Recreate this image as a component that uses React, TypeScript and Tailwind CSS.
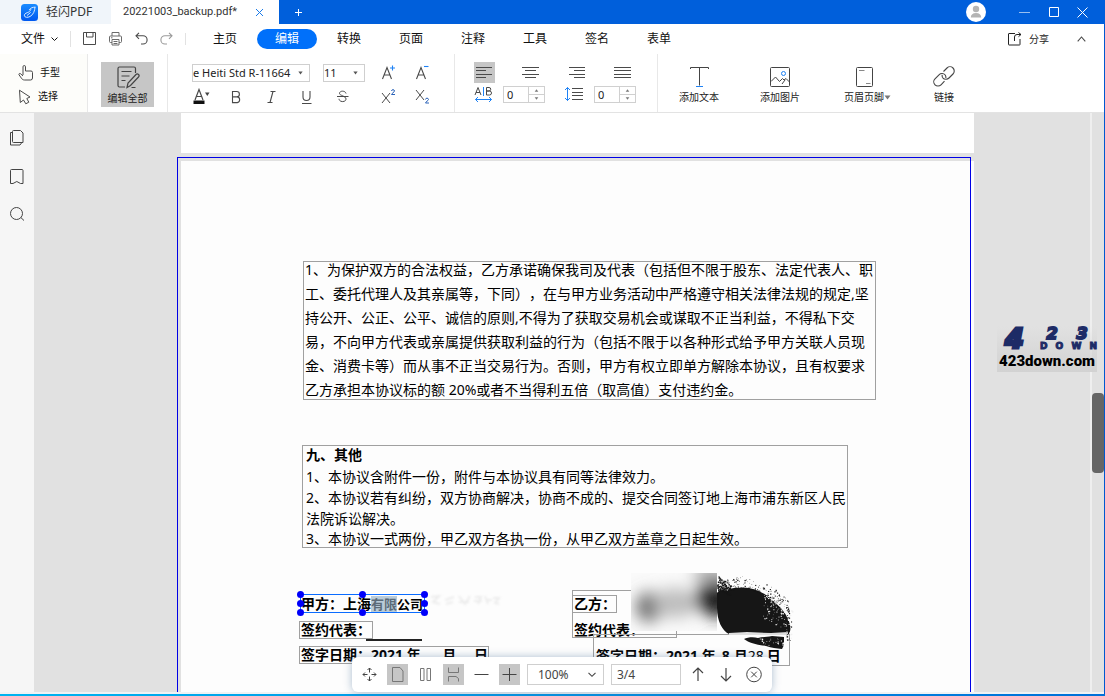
import React from "react";

type IconProps = { w: number; h: number; children: React.ReactNode; className?: string; sw?: number };

function Icon({ w, h, children, className = "", sw = 1 }: IconProps) {
  return (
    <svg
      width={w}
      height={h}
      viewBox={`0 0 ${w} ${h}`}
      fill="none"
      stroke="currentColor"
      strokeWidth={sw}
      className={`shrink-0 ${className}`}
      aria-hidden="true"
    >
      {children}
    </svg>
  );
}

function Caret({ className = "" }: { className?: string }) {
  return (
    <svg width="7" height="5" viewBox="0 0 7 5" className={`shrink-0 ${className}`} aria-hidden="true">
      <path d="M0.5 0.5h6L3.5 4.5z" fill="currentColor" />
    </svg>
  );
}

function TitleBar() {
  return (
    <header className="flex h-6 shrink-0 items-stretch bg-[#005fdb] text-[12px] text-[#333]">
      <div className="flex w-[111px] items-center gap-2 bg-[#f0f5fa] pl-[21px]">
        <svg width="17" height="17" viewBox="0 0 17 17" aria-hidden="true">
          <defs>
            <linearGradient id="logoFill" x1="0" y1="0" x2="0" y2="1">
              <stop offset="0" stopColor="#1a8cff" />
              <stop offset="1" stopColor="#0058f0" />
            </linearGradient>
          </defs>
          <rect width="17" height="17" rx="3.5" fill="url(#logoFill)" />
          <path
            d="M14 3.200C11.500 3.200 9.800 3.800 8.300 5.600M14 3.200c-.2 3.600-1.500 7.400-5 9.300-2.600 1.400-5.200.9-5.600-.6-.4-1.600 1.200-2.700 2.800-3.200 1.800-.6 3-1.500 3.600-3.200M6.300 11.300l3-2.600"
            fill="none"
            stroke="#d8eaff"
            strokeWidth="1"
            strokeLinecap="round"
          />
        </svg>
        <span className="whitespace-nowrap">轻闪PDF</span>
      </div>
      <div className="flex w-[168px] items-center justify-between bg-white pl-3 pr-[15px]">
        <span className="whitespace-nowrap font-['Roboto'] text-[11px]">20221003_backup.pdf*</span>
        <button aria-label="关闭标签页" className="text-[#1a7ae8]">
          <Icon w={9} h={9}>
            <path d="M1 1l7 7M8 1L1 8" />
          </Icon>
        </button>
      </div>
      <button aria-label="新建标签页" className="flex w-[38px] items-center justify-center text-white">
        <Icon w={7} h={7}>
          <path d="M3.500 0v7M0 3.500h7" />
        </Icon>
      </button>
      <div className="ml-auto flex items-center pr-[10px] text-white">
        <button aria-label="账户" className="mr-[23px]">
          <svg width="20" height="20" viewBox="0 0 20 20" aria-hidden="true">
            <circle cx="10" cy="10" r="10" fill="#fff" />
            <circle cx="10" cy="7" r="3.200" fill="#b4b4b4" />
            <path d="M4.800 15.500c0-3 2-4.500 5.200-4.500s5.200 1.500 5.200 4.500z" fill="#b4b4b4" />
          </svg>
        </button>
        <button aria-label="最小化" className="flex w-[30px] justify-center">
          <Icon w={11} h={11} className="opacity-60">
            <path d="M0 5.500h11" />
          </Icon>
        </button>
        <button aria-label="最大化" className="flex w-[30px] justify-center">
          <Icon w={10} h={10}>
            <path d="M0.500 0.500h9v9h-9z" />
          </Icon>
        </button>
        <button aria-label="关闭" className="flex w-[26px] justify-center">
          <Icon w={11} h={11}>
            <path d="M0.500 0.500l10 10M10.500 0.500l-10 10" />
          </Icon>
        </button>
      </div>
    </header>
  );
}

const MENU = ["主页", "编辑", "转换", "页面", "注释", "工具", "签名", "表单"];

function MenuBar() {
  return (
    <div className="flex h-[30px] shrink-0 items-center text-[12px] text-[#111]">
      <button className="flex items-center gap-[6px] pl-[21px]">
        文件
        <Icon w={7} h={5}>
          <path d="M0.500 0.500l3 3 3-3" />
        </Icon>
      </button>
      <div className="ml-3 h-4 w-px bg-[#e2e2e2]" />
      <div className="ml-3 flex items-center gap-3 text-[#4a4a4a]">
        <button aria-label="保存">
          <Icon w={14} h={14}>
            <path d="M0.500 0.500h12v12h-12zM3.500 0.500v4.500h6.500v-4.500" />
          </Icon>
        </button>
        <button aria-label="打印">
          <Icon w={14} h={14} className="text-[#6a6a6a]">
            <path d="M3 4V0.500h7V4M3 10.500H1.500a1 1 0 0 1-1-1V5a1 1 0 0 1 1-1h10a1 1 0 0 1 1 1v4.500a1 1 0 0 1-1 1H10M3 7.500h7v5.500H3zM4.500 9.500h4M4.500 11.500h4M2 5.800h1.500" />
          </Icon>
        </button>
        <button aria-label="撤销">
          <Icon w={13} h={14} sw={1.1}>
            <path d="M4 0.800L1 3.800l3 3M1 3.800h7a4 4 0 0 1 0 8.200H6" />
          </Icon>
        </button>
        <button aria-label="重做" className="text-[#9a9a9a]">
          <Icon w={13} h={14} sw={1.1}>
            <path d="M9 0.800l3 3-3 3M12 3.800H5a4 4 0 0 0 0 8.200h2" />
          </Icon>
        </button>
      </div>
      <div className="ml-3 h-3 w-px bg-[#e2e2e2]" />
      <nav className="ml-[9px] flex gap-[2px]">
        {MENU.map((m) => (
          <button
            key={m}
            className={
              m === "编辑"
                ? "h-5 w-[60px] rounded-full bg-[#0070fa] leading-5 text-white"
                : "h-5 w-[60px] leading-5"
            }
          >
            {m}
          </button>
        ))}
      </nav>
      <div className="ml-auto flex items-center pr-[18px] text-[#4a4a4a]">
        <button className="flex items-center gap-[7px] text-[10px] text-[#222]">
          <Icon w={14} h={14}>
            <path d="M7 1.500H1a.5.500 0 0 0-.5.500v10.500a.5.500 0 0 0 .5.500h10.500a.5.500 0 0 0 .5-.5V7M6.500 9V5a2.500 2.500 0 0 1 2.500-2.500h4M10.500 0.500l2.500 2-2.500 2.200" />
          </Icon>
          分享
        </button>
        <button aria-label="收起功能区" className="ml-7">
          <Icon w={9} h={6} sw={1.1}>
            <path d="M0.700 5.300l3.800-4.300 3.800 4.300" />
          </Icon>
        </button>
      </div>
    </div>
  );
}

function Combo({ label, value, className }: { label: string; value: string; className: string }) {
  return (
    <div className={`grid h-[18px] items-center border border-[#cfcfcf] bg-white ${className}`}>
      <select
        aria-label={label}
        defaultValue={value}
        className="col-start-1 row-start-1 h-4 w-full appearance-none bg-transparent text-[11px] leading-4 text-[#222] outline-none"
      >
        <option>{value}</option>
      </select>
      <Caret className="pointer-events-none col-start-1 row-start-1 mr-[6px] h-1 w-[5px] justify-self-end text-[#555]" />
    </div>
  );
}

function Spinner({ label }: { label: string }) {
  return (
    <div className="flex h-[17px] w-[42px] border border-[#d0d0d0] bg-white">
      <input
        aria-label={label}
        defaultValue="0"
        className="w-6 pl-[3px] text-[11px] leading-[15px] text-[#222] outline-none"
      />
      <div className="flex flex-1 flex-col border-l border-[#d0d0d0] text-[#777]">
        <button aria-label={`增加${label}`} className="flex flex-1 items-center justify-center border-b border-[#d0d0d0]">
          <Caret className="h-[3px] w-[5px] rotate-180" />
        </button>
        <button aria-label={`减少${label}`} className="flex flex-1 items-center justify-center">
          <Caret className="h-[3px] w-[5px]" />
        </button>
      </div>
    </div>
  );
}

function ToolButton({ label, children, active = false }: { label: string; children: React.ReactNode; active?: boolean }) {
  return (
    <button
      aria-label={label}
      className={
        active
          ? "flex h-[21px] w-[21px] items-center justify-center bg-[#c6c6c6]"
          : "flex h-[21px] w-[21px] items-center justify-center"
      }
    >
      {children}
    </button>
  );
}

function Ribbon() {
  return (
    <div className="flex h-[59px] shrink-0 border-b border-[#e3e3e3] text-[10px] text-[#4a4a4a]">
      <div className="flex w-[88px] flex-col gap-[3px] border-r border-[#e8e8e8] bg-[#fdfdfa] pl-[18px] pt-2">
        <button className="flex h-[21px] items-center gap-[6px] text-[#111]">
          <Icon w={16} h={16} className="text-[#4a4a4a]">
            <path d="M5 10V1.800a1.200 1.200 0 0 1 2.500 0V6h5.500a1.500 1.500 0 0 1 1.500 1.500V13a2 2 0 0 1-2 2H6.500c-1.500 0-2.500-.8-3.200-2L1 9.800c-.5-1 .7-1.800 1.500-1.100l2.500 2.300" />
          </Icon>
          手型
        </button>
        <button className="flex h-[21px] items-center gap-1 text-[#111]">
          <Icon w={16} h={16} className="text-[#4a4a4a]">
            <path d="M1.500 1.200l.8 12.300 3.200-2.500 2.300 3.800 3-1.600-2-3.700 3.200-1.500z" strokeLinejoin="round" />
          </Icon>
          选择
        </button>
      </div>
      <div className="flex w-[80px] justify-center border-r border-[#e8e8e8] pt-2">
        <button className="flex h-[45px] w-[53px] flex-col items-center gap-[2px] bg-[#c6c6c6] pt-1 text-[#222]">
          <Icon w={24} h={23} className="text-[#444]" sw={1.2}>
            <path d="M19.500 7V2.500a1.500 1.500 0 0 0-1.500-1.500H3.500a1.500 1.500 0 0 0-1.500 1.500v17a1.500 1.500 0 0 0 1.500 1.500H9M5.500 5.500h10M5.500 10h8M5.500 14.500h4M11 21.500l1-4.500 8-8.500a1.500 1.500 0 0 1 2.500 2.500l-8 8.500zM15.500 21.500h4" />
          </Icon>
          <span className="whitespace-nowrap leading-[14px]">编辑全部</span>
        </button>
      </div>
      <div className="flex flex-col gap-[3px] border-r border-[#e8e8e8] pl-6 pr-[21px] pt-2">
        <div className="flex h-[21px] items-center gap-[13px]">
          <Combo label="字体" value="e Heiti Std R-11664" className="w-[118px]" />
          <Combo label="字号" value="11" className="w-[42px]" />
          <ToolButton label="增大字号">
            <Icon w={15} h={15} sw={1.1}>
              <path d="M1.500 14L6 2.500 10.500 14M3 10h6" />
              <path d="M11.500 0.500v5M9 3h5" stroke="#1e82f5" />
            </Icon>
          </ToolButton>
          <ToolButton label="减小字号">
            <Icon w={15} h={15} sw={1.1}>
              <path d="M1.500 14L6 2.500 10.500 14M3 10h6" />
              <path d="M9 1.500h4.500" stroke="#1e82f5" />
            </Icon>
          </ToolButton>
        </div>
        <div className="flex h-[21px] items-center">
          <div className="flex gap-[14px]">
            <ToolButton label="字体颜色">
              <Icon w={19} h={17} sw={1.2}>
                <path d="M2 12L6 1.500 10 12M3.500 8.500h5" />
                <path d="M0.500 12.500h11v3.500h-11z" fill="#111" stroke="none" />
                <path d="M12 4.500h4.500l-2.200 3.500z" fill="#444" stroke="none" />
              </Icon>
            </ToolButton>
            <ToolButton label="粗体">
              <Icon w={15} h={14} sw={1.1}>
                <path d="M2.500 1.500h4.200a2.700 2.700 0 0 1 0 5.400H2.500zM2.500 6.900h4.800a2.900 2.900 0 0 1 0 5.700H2.500z" />
              </Icon>
            </ToolButton>
            <ToolButton label="斜体">
              <Icon w={15} h={14} sw={1.1}>
                <path d="M5.500 1.500h5M2.500 12.500h5M8 1.500L5 12.500" />
              </Icon>
            </ToolButton>
            <ToolButton label="下划线">
              <Icon w={15} h={14} sw={1.1}>
                <path d="M3 1v6a3.500 3.500 0 0 0 7 0V1M2 13.500h9.500" />
              </Icon>
            </ToolButton>
            <ToolButton label="删除线">
              <Icon w={13} h={13}>
                <path d="M10 3.500C9.500 0.500 3.500 0.300 3.500 3.500c0 2 6.500 2.500 6.500 5.500 0 3.500-6.800 3.500-7-0.200M1 6.500h11.500" />
              </Icon>
            </ToolButton>
          </div>
          <div className="ml-[25px] flex gap-[13px]">
            <ToolButton label="上标">
              <Icon w={15} h={15}>
                <path d="M1 4l8 10M9 4L1 14" />
                <path d="M10.500 2c0-1.800 3-1.800 3 0 0 1-3 2.500-3 3.500h3.500" stroke="#2a62b8" />
              </Icon>
            </ToolButton>
            <ToolButton label="下标">
              <Icon w={15} h={15}>
                <path d="M1 1l8 10M9 1L1 11" />
                <path d="M10.500 10.500c0-1.800 3-1.800 3 0 0 1-3 2.500-3 3.500h3.500" stroke="#2a62b8" />
              </Icon>
            </ToolButton>
          </div>
        </div>
      </div>
      <div className="flex flex-col gap-[3px] border-r border-[#e8e8e8] pl-[19px] pr-[21px] pt-2">
        <div className="flex h-[21px] gap-[25px]">
          <ToolButton label="左对齐" active>
            <Icon w={17} h={12}>
              <path d="M0 0.500h16M0 3.500h10M0 7.500h16M0 10.500h10" />
            </Icon>
          </ToolButton>
          <ToolButton label="居中对齐">
            <Icon w={17} h={12}>
              <path d="M0 0.500h17M3 3.500h11M0 7.500h17M3 10.500h11" />
            </Icon>
          </ToolButton>
          <ToolButton label="右对齐">
            <Icon w={17} h={12}>
              <path d="M1 0.500h16M6 3.500h11M1 7.500h16M6 10.500h11" />
            </Icon>
          </ToolButton>
          <ToolButton label="两端对齐">
            <Icon w={17} h={12}>
              <path d="M0 0.500h17M0 3.500h17M0 7.500h17M0 10.500h17" />
            </Icon>
          </ToolButton>
        </div>
        <div className="flex h-[21px] items-start">
          <Icon w={20} h={17}>
            <path d="M1 9l3-7.500L7 9M2 6.500h4M12.500 1.500h2.500a1.700 1.700 0 0 1 0 3.500h-2.500zM12.500 5h3a1.900 1.900 0 0 1 0 4h-3z" />
            <path d="M9.500 1v9M1.500 13.500h16M4 11l-2.500 2.500L4 16M15 11l2.500 2.500L15 16" stroke="#1e82f5" />
          </Icon>
          <div className="ml-[9px]">
            <Spinner label="字间距" />
          </div>
          <Icon w={20} h={17} className="ml-[19px]">
            <path d="M8 2.500h11M8 6.500h11M8 9.500h11M8 13.500h11" />
            <path d="M3.500 1.500v13M1 4l2.500-2.500L6 4M1 12l2.500 2.500L6 12" stroke="#1e82f5" />
          </Icon>
          <div className="ml-[10px]">
            <Spinner label="行间距" />
          </div>
        </div>
      </div>
      <div className="flex items-start gap-5 pl-[11px] pt-[11px] text-[#222]">
        <button className="flex w-[60px] flex-col items-center gap-[3px]">
          <Icon w={21} h={22} className="text-[#444]">
            <path d="M1.500 4V2.500h18V4M10.500 2.500v18" />
            <path d="M7 21.500h7" stroke="#1e82f5" />
          </Icon>
          <span className="leading-[14px]">添加文本</span>
        </button>
        <button className="flex w-[62px] flex-col items-center gap-[3px]">
          <Icon w={20} h={22} className="text-[#444]">
            <rect x="0.500" y="2.500" width="19" height="19" rx="1" />
            <path d="M1 16.500l4.500-4.500 4 4.500 3-3 1.500 1.500 2-1.500 3.500 3.500M12 19l3-4" />
            <circle cx="13.500" cy="8.500" r="2" stroke="#1e82f5" />
          </Icon>
          <span className="leading-[14px]">添加图片</span>
        </button>
        <button className="flex w-[66px] flex-col items-center gap-[3px]">
          <Icon w={17} h={22} className="text-[#444]">
            <rect x="0.500" y="2.500" width="16" height="19" rx="1" />
            <path d="M3 5.500h5.500M10 18.500h4.500" stroke="#888" />
          </Icon>
          <span className="flex items-center leading-[14px]">
            页眉页脚
            <Caret className="-mr-[7px] text-[#777]" />
          </span>
        </button>
        <button className="flex w-[54px] flex-col items-center gap-[3px]">
          <Icon w={22} h={22} sw={1.100} className="text-[#444]">
            <path d="M10.500 6.500l3.500-3.500a4.200 4.200 0 0 1 6 6l-4 4a4.200 4.200 0 0 1-6.200-.2M11.500 16.200L8 19.800a4.200 4.200 0 0 1-6-6l4-4a4.200 4.200 0 0 1 6.200.2M9.800 12.800c-.7-1-.8-2-.6-3M12.200 10c.7 1 .8 2 .6 3" />
          </Icon>
          <span className="leading-[14px]">链接</span>
        </button>
      </div>
    </div>
  );
}

function Sidebar() {
  return (
    <aside className="flex w-[34px] shrink-0 flex-col items-start gap-[22px] bg-[#f6f6f6] pl-[10px] pt-[17px] text-[#444]">
      <button aria-label="页面缩略图">
        <Icon w={14} h={16}>
          <path d="M3.500 0.500h7l2.500 2.500v9.500H3.500a1 1 0 0 1-1-1V1.500a1 1 0 0 1 1-1zM2.500 2.500h-2v12.500h9.500l1.500-2" strokeLinejoin="round" />
        </Icon>
      </button>
      <button aria-label="书签">
        <Icon w={14} h={16}>
          <path d="M1.500 1.500h10.500a1 1 0 0 1 1 1V15.500h-2.500L6.800 13.500l-3.800 2H0.500V2.500a1 1 0 0 1 1-1z" />
        </Icon>
      </button>
      <button aria-label="搜索">
        <Icon w={15} h={16}>
          <circle cx="6.500" cy="7.500" r="6" />
          <path d="M10.800 11.500l3.200 3" />
        </Icon>
      </button>
    </aside>
  );
}

const CLAUSE = [
  "1、为保护双方的合法权益，乙方承诺确保我司及代表（包括但不限于股东、法定代表人、职",
  "工、委托代理人及其亲属等，下同），在与甲方业务活动中严格遵守相关法律法规的规定,坚",
  "持公开、公正、公平、诚信的原则,不得为了获取交易机会或谋取不正当利益，不得私下交",
  "易，不向甲方代表或亲属提供获取利益的行为（包括不限于以各种形式给予甲方关联人员现",
  "金、消费卡等）而从事不正当交易行为。否则，甲方有权立即单方解除本协议，且有权要求",
  "乙方承担本协议标的额 20%或者不当得利五倍（取高值）支付违约金。",
];

const OTHERS = [
  "1、本协议含附件一份，附件与本协议具有同等法律效力。",
  "2、本协议若有纠纷，双方协商解决，协商不成的、提交合同签订地上海市浦东新区人民",
  "法院诉讼解决。",
];

function seeded(seed: number) {
  let s = seed;
  return () => {
    s = (s * 16807) % 2147483647;
    return s / 2147483647;
  };
}

function inkEdge(x: number) {
  return x < 104 ? 17 : 15 + Math.pow((x - 104) / 56, 2) * 26;
}

function speckles() {
  const rnd = seeded(4211);
  const dots: { x: number; y: number; s: number; dark: boolean }[] = [];
  for (let i = 0; i < 200; i++) {
    const x = 86 + rnd() * 72;
    dots.push({ x, y: inkEdge(x) - Math.pow(rnd(), 2) * 12, s: 0.400 + rnd() * 0.900, dark: true });
  }
  for (let i = 0; i < 110; i++) {
    const x = 132 + rnd() * 28;
    dots.push({ x, y: inkEdge(x) + Math.pow(rnd(), 2) * 24, s: 0.400 + rnd() * 0.900, dark: false });
  }
  for (let i = 0; i < 50; i++) {
    dots.push({ x: 155 + Math.pow(rnd(), 2) * 6, y: 34 + rnd() * 34, s: 0.500 + rnd() * 1, dark: rnd() > 0.4 });
  }
  for (let i = 0; i < 80; i++) {
    const t = rnd();
    dots.push({ x: 86 + t * 13, y: 2 + t * 8 + rnd() * 13, s: 0.600 + rnd() * 1.300, dark: true });
  }
  for (let i = 0; i < 26; i++) {
    dots.push({ x: 128 + rnd() * 24, y: 65 + rnd() * 7, s: 0.500 + rnd() * 1, dark: false });
  }
  return dots;
}

const DOTS = speckles();

function InkStamp() {
  return (
    <svg width="166" height="78" viewBox="0 0 166 78" aria-hidden="true">
      <defs>
        <filter id="soft" x="-80%" y="-80%" width="260%" height="260%">
          <feGaussianBlur stdDeviation="8" />
        </filter>
        <clipPath id="photo">
          <rect width="86" height="58" />
        </clipPath>
      </defs>
      <g clipPath="url(#photo)">
        <rect width="86" height="58" fill="#fafafa" />
        <g filter="url(#soft)">
          <ellipse cx="18" cy="34" rx="13" ry="15" fill="#6a6a6a" />
          <ellipse cx="44" cy="30" rx="22" ry="15" fill="#bdbdbd" />
          <ellipse cx="88" cy="26" rx="24" ry="18" fill="#222" />
          <ellipse cx="80" cy="2" rx="18" ry="9" fill="#a8a8a8" />
        </g>
      </g>
      <path
        d="M86 20c3-4 7-3 11-2 3-2 6-4 10-3 12-2 24 3 33 11 10 8 17 16 19 26 1 4 0 7-1 9H98c-7-3-12-14-12-26z"
        fill="#161616"
      />
      <path d="M98 60l18-1 24 1 17-1v3H98z" fill="#dedede" />
      <path d="M113 66c4-2 10-2 14-1 5-1 9-1 14-2l12 1v8l-2 4c-6-1-10-1-16-3-9-1-17-3-22-7z" fill="#161616" />
      {DOTS.map((d, i) => (
        <rect key={i} x={d.x} y={d.y} width={d.s} height={d.s} fill={d.dark ? "#161616" : "#f0f0f0"} />
      ))}
    </svg>
  );
}

const HANDLES = [
  "-left-[4px] -top-[4px]",
  "left-[58px] -top-[4px]",
  "-right-[4px] -top-[4px]",
  "-left-[4px] top-[5px]",
  "-right-[4px] top-[5px]",
  "-left-[4px] -bottom-[4px]",
  "left-[58px] -bottom-[4px]",
  "-right-[4px] -bottom-[4px]",
];

function SignatureArea() {
  return (
    <div className="relative h-[100px] text-[14px] font-bold leading-4">
      <div className="absolute left-[118px] top-1 flex flex-col items-start">
        <div className="relative ml-px h-[19px] w-[125px] border border-[#0a6cff]">
          <div className="flex h-[17px] items-center whitespace-nowrap">
            <span>甲方：上海</span>
            <span className="bg-[#b9cbd9] text-[13px] text-[#5c6b78]">有限</span>
            <span className="text-[13px]">公司</span>
          </div>
          {HANDLES.map((h) => (
            <span key={h} className={`absolute h-[7px] w-[7px] rounded-full bg-[#0000fa] ${h}`} />
          ))}
        </div>
        <div className="mt-2 h-[18px] w-[74px] whitespace-nowrap border border-[#a0a0a0] pl-px">签约代表：</div>
        <div className="ml-[67px] h-[2px] w-14 bg-[#222]" />
        <div className="mt-[5px] flex h-[18px] w-[190px] justify-between whitespace-nowrap border border-[#a0a0a0] pl-px">
          <span>签字日期：2021 年</span>
          <span className="pl-1">月</span>
          <span>日</span>
        </div>
      </div>
      <svg width="76" height="18" viewBox="0 0 76 18" className="absolute left-[248px] top-px" aria-hidden="true">
        <g stroke="#dcdcdc" strokeWidth="2" fill="none" opacity="0.500" className="blur-[1px]">
          <path d="M2 6l8-1-6 6 7 2M16 9l9-3M17 13l7-2M30 5l6 8 5-8M30 11h10M46 6h6l-3 7M45 10h8M56 5l3 8M58 9h5M64 7h6l-4 5 4 1" />
        </g>
      </svg>
      <div className="absolute left-[391px] top-0 h-[48px] w-[105px] border border-[#a0a0a0]">
        <div className="mt-1 h-[18px] w-11 whitespace-nowrap border border-l-0 border-[#a0a0a0] pl-px">乙方：</div>
        <div className="mt-[9px] whitespace-nowrap pl-px">签约代表：</div>
      </div>
      <div className="absolute left-[412px] top-[44px] flex h-[32px] w-[197px] whitespace-nowrap border border-[#a0a0a0] pl-[2px] pt-[13px]">
        <span>签字日期：2021 年</span>
        <span className="ml-[6px]">8</span>
        <span className="ml-1">月</span>
        <span className="font-normal">28</span>
        <span className="ml-[3px]">日</span>
      </div>
      <div className="absolute -top-[17px] left-[450px]">
        <InkStamp />
      </div>
    </div>
  );
}

function PdfPage() {
  return (
    <section className="relative mt-2 w-[793px] min-h-[540px] flex-1 bg-[#fdfdfd] pt-[100px] text-[14px] text-black">
      <div className="pointer-events-none absolute -left-1 -top-1 bottom-[-20px] right-[3px] border border-[#0000e6]" />
      <div className="ml-[122px] flex h-[139px] w-[573px] flex-col justify-center whitespace-nowrap border border-[#a0a0a0] pb-[2px] pl-px leading-6">
        {CLAUSE.map((l) => (
          <p key={l}>{l}</p>
        ))}
      </div>
      <div className="ml-[121px] mt-[45px] flex h-[103px] w-[546px] flex-col justify-center whitespace-nowrap border border-[#a0a0a0] pb-[2px] pl-[3px]">
        <h2 className="font-bold leading-[22px]">九、其他</h2>
        {OTHERS.map((l) => (
          <p key={l} className="leading-[21px]">
            {l}
          </p>
        ))}
        <p className="leading-[19px]">3、本协议一式两份，甲乙双方各执一份，从甲乙双方盖章之日起生效。</p>
      </div>
      <div className="mt-[42px]">
        <SignatureArea />
      </div>
    </section>
  );
}

function Watermark() {
  return (
    <div className="absolute right-[-7px] top-[213px] z-10 w-[100px] whitespace-nowrap bg-gradient-to-b from-transparent to-[#d2d2d2] pb-px">
      <div className="flex h-[25px] items-start font-['DejaVu_Sans'] font-bold text-[#1d2b66]">
        <span className="w-[40px] pl-2 text-[27px] italic leading-[25px] [-webkit-text-stroke:3px_#1d2b66]">4</span>
        <div className="flex flex-1 flex-col">
          <div className="flex justify-around text-[16px] italic leading-[16px] [-webkit-text-stroke:2px_#1d2b66]">
            <span>2</span>
            <span>3</span>
          </div>
          <div className="flex justify-between pl-[3px] text-[9px] leading-[9px] [-webkit-text-stroke:1px_#1d2b66]">
            <span>D</span>
            <span>O</span>
            <span>W</span>
            <span>N</span>
          </div>
        </div>
      </div>
      <div className="text-center font-['Roboto'] text-[15px] font-black leading-[20px] text-black">423down.com</div>
    </div>
  );
}

function FloatingBar() {
  return (
    <div className="absolute bottom-0 left-1/2 z-20 flex h-[35px] -translate-x-1/2 items-center gap-[7px] rounded-md bg-white px-[7px] text-[12px] text-[#444] shadow-[0_0_8px_rgba(70,110,150,0.45)]">
      <ToolButton label="移动">
        <Icon w={15} h={15}>
          <path d="M7.500 1v4.500M7.500 9.500V14M1 7.500h4.500M9.500 7.500H14M5.500 3l2-2 2 2M5.500 12l2 2 2-2M3 5.500l-2 2 2 2M12 5.500l2 2-2 2" />
        </Icon>
      </ToolButton>
      <ToolButton label="单页" active>
        <Icon w={13} h={15} className="text-[#777]">
          <path d="M1.500 0.500h7.500l3 3.500v10.500H1.500z" />
        </Icon>
      </ToolButton>
      <ToolButton label="双页">
        <Icon w={13} h={15} className="text-[#777]">
          <path d="M1.500 1.500h3.500v12h-3.500zM8 1.500h3.500v12H8z" />
        </Icon>
      </ToolButton>
      <ToolButton label="连续滚动" active>
        <Icon w={13} h={15} className="text-[#777]">
          <path d="M1.500 0.500v5h10v-5M1.500 14.500v-5h7.500l2.500 2v3" />
        </Icon>
      </ToolButton>
      <ToolButton label="缩小">
        <Icon w={15} h={15}>
          <path d="M0.500 7.500h14" />
        </Icon>
      </ToolButton>
      <ToolButton label="放大" active>
        <Icon w={15} h={15}>
          <path d="M0.500 7.500h14M7.500 1v13" />
        </Icon>
      </ToolButton>
      <div className="grid h-[21px] w-[77px] items-center border border-[#cfcfcf]">
        <select
          aria-label="缩放比例"
          defaultValue="100%"
          className="col-start-1 row-start-1 h-[19px] w-full appearance-none bg-transparent pl-[10px] leading-[19px] outline-none"
        >
          <option>100%</option>
        </select>
        <Icon w={8} h={6} className="pointer-events-none col-start-1 row-start-1 mr-[7px] justify-self-end" sw={1.100}>
          <path d="M0.500 0.800l3.500 3.500 3.500-3.500" />
        </Icon>
      </div>
      <input
        aria-label="页码"
        defaultValue="3/4"
        className="h-[21px] w-[70px] border border-[#cfcfcf] pl-[5px] leading-[19px] outline-none"
      />
      <ToolButton label="上一页">
        <Icon w={13} h={15} sw={1.200}>
          <path d="M6 14V1M1 6l5-5 5 5" />
        </Icon>
      </ToolButton>
      <ToolButton label="下一页">
        <Icon w={13} h={15} sw={1.200}>
          <path d="M6 1v13M1 9l5 5 5-5" />
        </Icon>
      </ToolButton>
      <ToolButton label="关闭工具栏">
        <Icon w={17} h={17}>
          <circle cx="8" cy="8.500" r="7.300" />
          <path d="M5.200 5.700l5.600 5.600M10.800 5.700l-5.600 5.600" />
        </Icon>
      </ToolButton>
    </div>
  );
}

export default function App() {
  return (
    <div className="flex h-screen flex-col overflow-hidden bg-white font-['Noto_Sans','Noto_Sans_CJK_SC',sans-serif] [text-spacing-trim:space-all]">
      <TitleBar />
      <div className="flex min-h-0 flex-1 flex-col border-r border-[#0058d0]">
        <MenuBar />
        <Ribbon />
        <div className="flex min-h-0 flex-1">
          <Sidebar />
          <div className="relative min-w-0 flex-1">
            <main className="flex h-full flex-col items-center overflow-hidden bg-[#e1e1e1] pl-[31px]">
              <div className="h-10 w-[793px] shrink-0 bg-white" />
              <PdfPage />
            </main>
            <Watermark />
            <FloatingBar />
          </div>
          <div className="flex w-[14px] shrink-0 flex-col border-l-2 border-[#efefef] bg-[#e1e1e1]">
            <div className="grow-[280]" />
            <div className="h-20 rounded-[4px] bg-[#666]" />
            <div className="grow-[219]" />
          </div>
        </div>
        <div className="h-[2px] shrink-0 bg-[#f0f2f4]" />
      </div>
      <div className="h-[2px] shrink-0 bg-gradient-to-r from-[#00b4f0] to-[#0070d8]" />
    </div>
  );
}
